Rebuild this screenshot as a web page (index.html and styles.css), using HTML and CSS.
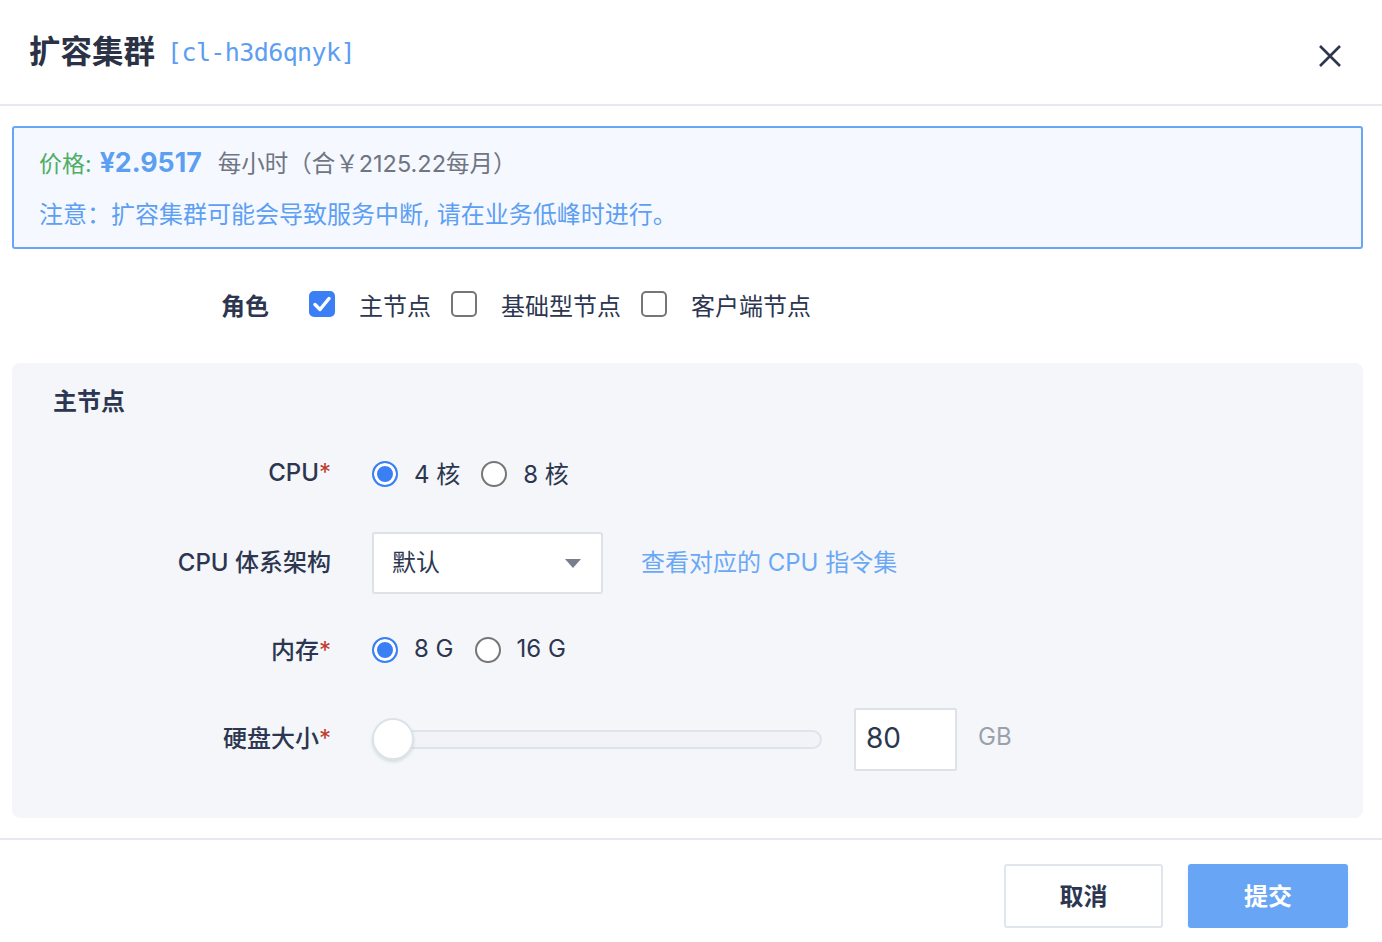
FILE: index.html
```html
<!DOCTYPE html>
<html lang="zh-CN">
<head>
<meta charset="utf-8">
<title>扩容集群</title>
<link rel="stylesheet" href="styles.css">
</head>
<body>
<div class="dialog">
  <header class="header">
    <h1 class="title">扩容集群 <span class="cid">[cl-h3d6qnyk]</span></h1>
    <button class="close" aria-label="关闭">
      <svg width="24" height="24" viewBox="0 0 24 24"><path d="M2 2 L22 22 M22 2 L2 22" stroke="#2d3650" stroke-width="2.6" fill="none"/></svg>
    </button>
  </header>

  <div class="body">
    <div class="alert">
      <div class="price-line">
        <span class="price-label">价格:</span>
        <span class="price">¥2.9517</span>
        <span class="price-note">每小时（合￥2125.22每月）</span>
      </div>
      <div class="notice">注意：扩容集群可能会导致服务中断, 请在业务低峰时进行。</div>
    </div>

    <div class="role-row">
      <span class="role-label">角色</span>
      <label class="check-item"><span class="checkbox checked"><svg width="18" height="16" viewBox="0 0 18 16"><path d="M2 8.5 L7 13.5 L16 2.5" stroke="#fff" stroke-width="3.4" fill="none" stroke-linecap="round" stroke-linejoin="round"/></svg></span>主节点</label>
      <label class="check-item"><span class="checkbox"></span>基础型节点</label>
      <label class="check-item"><span class="checkbox"></span>客户端节点</label>
    </div>

    <section class="panel">
      <h2 class="panel-title">主节点</h2>
      <div class="rows">
        <div class="row">
          <div class="label">CPU<span class="req">*</span></div>
          <div class="controls">
            <label class="radio-item"><span class="radio checked"></span><span class="txt">4 核</span></label>
            <label class="radio-item"><span class="radio"></span><span class="txt">8 核</span></label>
          </div>
        </div>
        <div class="row">
          <div class="label">CPU 体系架构</div>
          <div class="controls">
            <div class="select"><span class="txt">默认</span><span class="caret"></span></div>
            <a class="link txt">查看对应的 CPU 指令集</a>
          </div>
        </div>
        <div class="row">
          <div class="label">内存<span class="req">*</span></div>
          <div class="controls">
            <label class="radio-item"><span class="radio checked"></span><span class="txt">8 G</span></label>
            <label class="radio-item"><span class="radio"></span><span class="txt">16 G</span></label>
          </div>
        </div>
        <div class="row">
          <div class="label">硬盘大小<span class="req">*</span></div>
          <div class="controls">
            <div class="slider"><div class="track"></div><div class="thumb"></div></div>
            <div class="num-input">80</div>
            <span class="unit txt">GB</span>
          </div>
        </div>
      </div>
    </section>
  </div>

  <footer class="footer">
    <button class="btn btn-cancel">取消</button>
    <button class="btn btn-submit">提交</button>
  </footer>
</div>
</body>
</html>
```

FILE: styles.css
```css
* { box-sizing: border-box; }
html, body { margin: 0; padding: 0; background: #fff; }
body {
  font-family: Inter, "Noto Sans CJK SC", sans-serif;
  color: #2d3650;
  font-size: 24px;
}
.dialog { width: 1382px; }

.header {
  height: 106px;
  border-bottom: 2px solid #e6e9ef;
  display: flex;
  align-items: center;
  justify-content: space-between;
  padding: 0 40px 6px 29px;
}
.title {
  margin: 0;
  font-size: 31.5px;
  font-weight: 700;
  color: #2b3245;
  display: flex;
  align-items: baseline;
  gap: 12px;
}
.cid {
  font-family: "DejaVu Sans Mono", monospace;
  font-weight: 400;
  font-size: 25px;
  color: #5d9df2;
  letter-spacing: -0.6px;
  position: relative;
  top: -2px;
}
.close {
  border: 0;
  background: none;
  padding: 0;
  width: 24px;
  height: 24px;
  display: flex;
  margin-top: 14px;
}

.body { padding: 20px 19px 0 12px; }

.alert {
  height: 123px;
  border: 2px solid #68a6f5;
  border-radius: 3px;
  background: #f5f8fe;
  padding: 17px 0 0 25px;
}
.price-line {
  display: flex;
  align-items: baseline;
  height: 38px;
}
.price-label { color: #4fae66; font-size: 23px; }
.price { color: #5b9ff3; font-weight: 700; font-size: 26.7px; margin-left: 8px; }
.price-note { color: #6f7582; font-size: 23.5px; margin-left: 16px; }
.notice {
  margin-top: 12px;
  color: #5d9ff3;
  font-size: 24px;
}

.role-row {
  height: 114px;
  display: flex;
  align-items: center;
  padding: 0 0 4px 209px;
}
.role-label { font-weight: 700; margin-right: 40px; }
.check-item {
  display: flex;
  align-items: center;
  margin-right: 20px;
}
.checkbox {
  width: 26px;
  height: 26px;
  border: 2px solid #767676;
  border-radius: 5px;
  margin-right: 24px;
  display: flex;
  align-items: center;
  justify-content: center;
  background: #fff;
}
.checkbox.checked { background: #3b7ff5; border-color: #3b7ff5; }

.panel {
  background: #f4f6fa;
  border-radius: 8px;
  padding: 22px 0 48px 0;
}
.panel-title {
  margin: 0 0 0 41px;
  font-size: 24px;
  font-weight: 700;
  line-height: 34px;
}
.rows {
  margin-top: 25px;
  display: flex;
  flex-direction: column;
  gap: 26px;
}
.row {
  height: 62px;
  display: flex;
  align-items: center;
}
.label {
  width: 319px;
  text-align: right;
  font-weight: 500;
  margin-right: 41px;
  padding-bottom: 5px;
}
.txt { padding-bottom: 5px; }
.req { color: #c0392b; font-weight: 400; }
.controls { display: flex; align-items: center; }

.radio-item { display: flex; align-items: center; margin-right: 21px; }
.radio {
  width: 26px;
  height: 26px;
  border-radius: 50%;
  border: 2px solid #767676;
  background: #fff;
  margin-right: 16px;
  margin-bottom: 2px;
}
.radio.checked {
  border-color: #3b7ff5;
  background: #3b7ff5;
  box-shadow: inset 0 0 0 3px #fff;
}

.select {
  width: 231px;
  height: 62px;
  background: #fff;
  border: 2px solid #dde1e8;
  border-radius: 3px;
  display: flex;
  align-items: center;
  justify-content: space-between;
  padding: 0 20px 0 18px;
}
.caret {
  width: 0;
  height: 0;
  border-left: 8px solid transparent;
  border-right: 8px solid transparent;
  border-top: 9px solid #777f8c;
}
.link { color: #6aa8f5; margin-left: 38px; }

.slider {
  position: relative;
  width: 450px;
  height: 42px;
  display: flex;
  align-items: center;
}
.track {
  width: 100%;
  height: 19px;
  border: 2px solid #dde4ea;
  border-radius: 10px;
  background: #f2f3f8;
}
.thumb {
  position: absolute;
  left: 0;
  top: 0;
  width: 42px;
  height: 42px;
  border-radius: 50%;
  background: #fff;
  border: 2px solid #dce3e8;
  box-shadow: 0 2px 3px rgba(120, 160, 140, 0.25);
}
.num-input {
  margin-left: 32px;
  width: 103px;
  height: 63px;
  background: #fff;
  border: 2px solid #dde1e8;
  border-radius: 2px;
  padding: 0 0 3px 10px;
  display: flex;
  align-items: center;
  font-size: 28px;
  color: #2d3650;
}
.unit { color: #9aa1ad; margin-left: 21px; }

.footer {
  margin-top: 20px;
  border-top: 2px solid #e6e9ef;
  display: flex;
  justify-content: flex-end;
  gap: 25px;
  padding: 24px 34px 0 0;
}
.btn {
  height: 64px;
  border-radius: 3px;
  font-family: Inter, "Noto Sans CJK SC", sans-serif;
  font-size: 24px;
  font-weight: 700;
  padding-bottom: 5px;
}
.btn-cancel {
  width: 159px;
  background: #fff;
  border: 2px solid #e1e5ec;
  color: #2d3650;
}
.btn-submit {
  width: 160px;
  background: #68a6f5;
  border: 0;
  color: #fff;
  box-shadow: 0 3px 6px rgba(104, 166, 245, 0.15);
}
```
